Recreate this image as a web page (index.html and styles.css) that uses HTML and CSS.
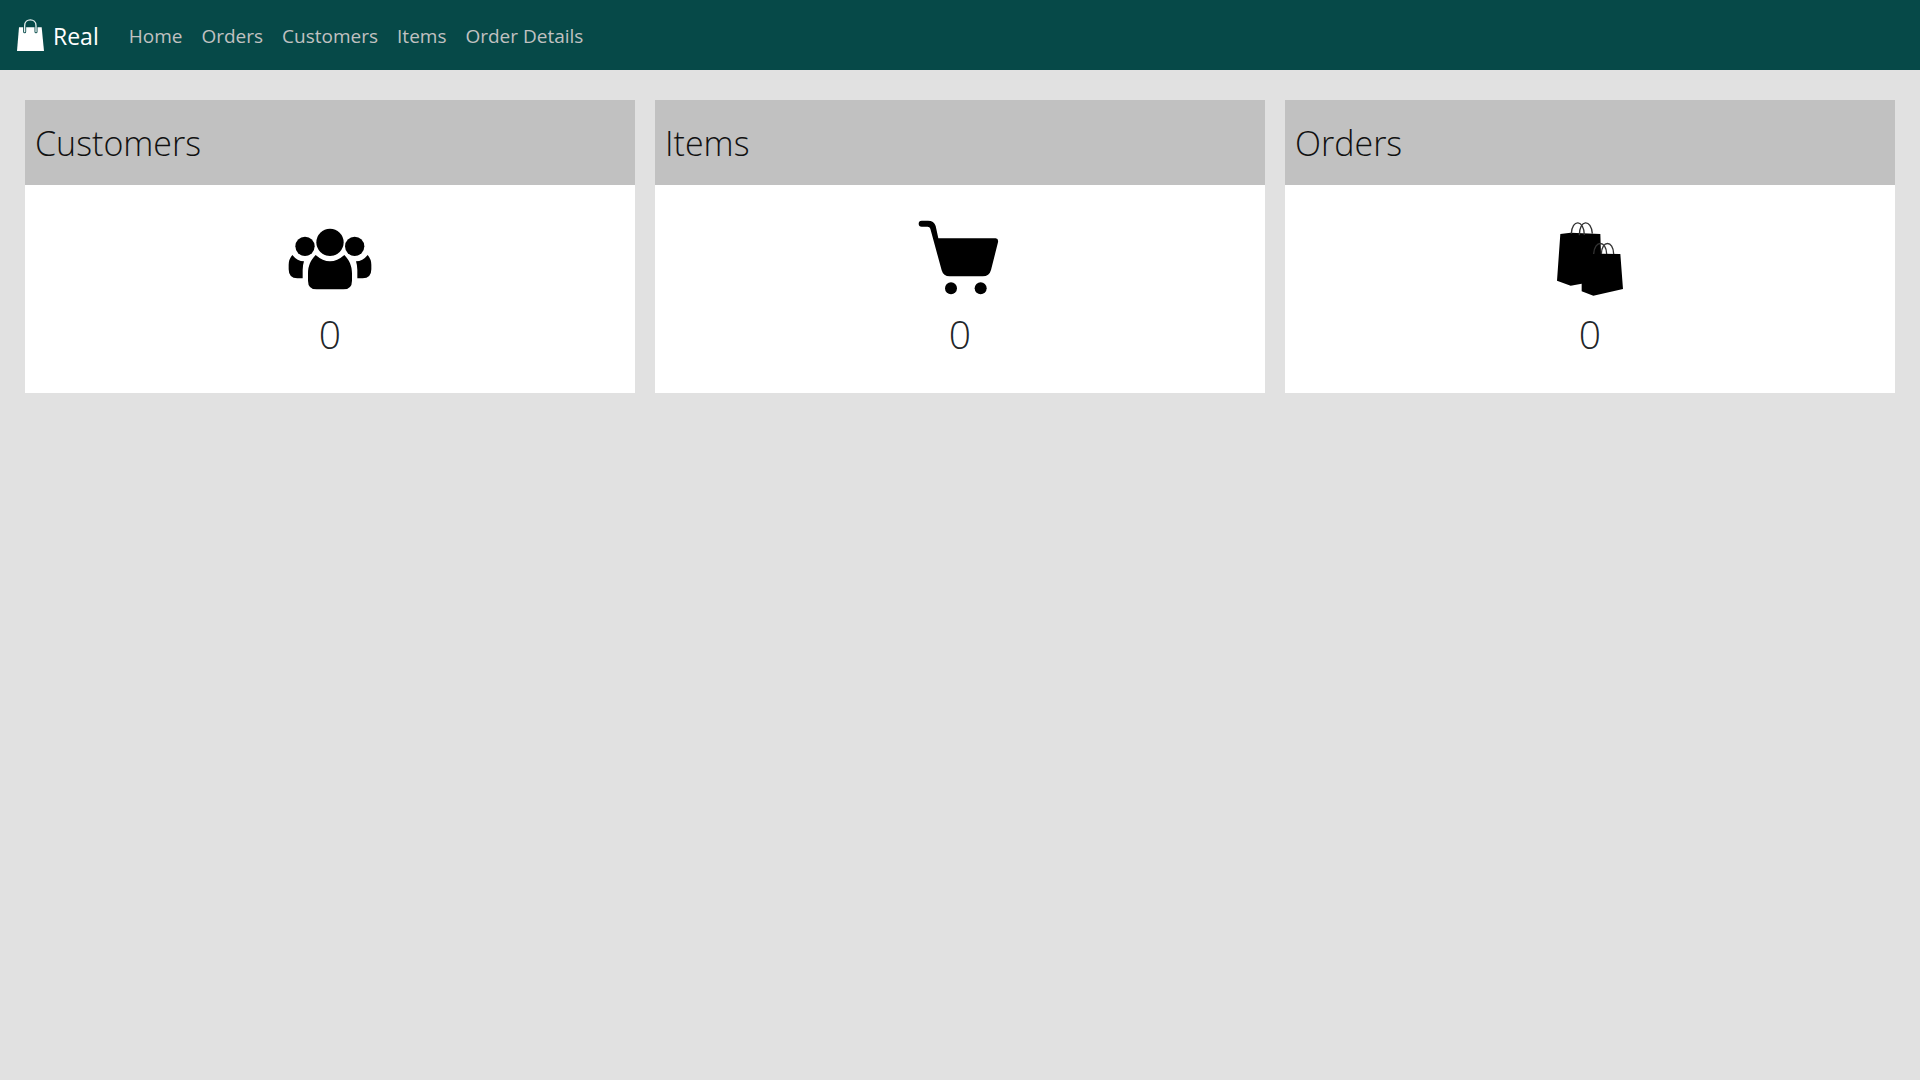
FILE: index.html
```html
<!DOCTYPE html>
<html lang="en">
<head>
<meta charset="utf-8">
<meta name="viewport" content="width=device-width, initial-scale=1">
<title>Real</title>
<link rel="stylesheet" href="styles.css">
</head>
<body>
<header class="navbar">
  <a class="brand" href="#">
    <svg class="brand-icon" viewBox="0 0 90 102" aria-hidden="true">
      <path fill="#fff" d="M12 25H80L87 96H6Z"/>
      <path fill="none" stroke="#064948" stroke-width="9" stroke-linecap="round" d="M29 25V38M63 25V38"/>
      <path fill="none" stroke="#e4efee" stroke-width="4" d="M29 40V20C29 -3 63 -3 63 20V40"/>
    </svg>
    <span>Real</span>
  </a>
  <nav class="nav-links" aria-label="Main">
    <a href="#">Home</a>
    <a href="#">Orders</a>
    <a href="#">Customers</a>
    <a href="#">Items</a>
    <a href="#">Order Details</a>
  </nav>
</header>
<main class="cards">
  <section class="card">
    <h2 class="card-title">Customers</h2>
    <div class="card-body">
      <svg class="card-icon" viewBox="30 0 300 300" aria-hidden="true">
        <circle cx="180" cy="97" r="41"/>
        <circle cx="105" cy="109" r="29"/>
        <circle cx="254" cy="109" r="29"/>
        <path d="M137 135Q180 173 223 135C238 150 246 168 246 190V212Q246 238 220 238H140Q114 238 114 212V190C114 168 122 150 137 135Z"/>
        <path d="M67 135Q82 154 102 154Q98 166 98 180V205H82Q56 205 56 178V164Q56 148 67 135Z"/>
        <path d="M293 135Q278 154 258 154Q262 166 262 180V205H278Q304 205 304 178V164Q304 148 293 135Z"/>
      </svg>
      <p class="card-count">0</p>
    </div>
  </section>
  <section class="card">
    <h2 class="card-title">Items</h2>
    <div class="card-body">
      <svg class="card-icon" viewBox="30 0 300 300" aria-hidden="true">
        <path d="M65 32H84Q102 32 107 48L115 85H287Q296 86 294 97L273 180Q268 199 248 199H149Q130 199 125 181L91 56Q89 50 83 50H65A9 9 0 0 1 65 32Z"/>
        <circle cx="153" cy="235" r="18"/>
        <circle cx="242" cy="235" r="18"/>
      </svg>
      <p class="card-count">0</p>
    </div>
  </section>
  <section class="card">
    <h2 class="card-title">Orders</h2>
    <div class="card-body">
      <svg class="card-icon" viewBox="30 0 300 300" aria-hidden="true">
        <path d="M91 72L122 68L211 72L213 131L271 132L279 237L190 257L155 244V221L122 227L81 212Z"/>
        <path fill="none" stroke="#333" stroke-width="4" d="M124 71C126 27 162 27 163 75M148 76C148 27 184 27 187 71M191 132C193 90 229 90 230 132M214 132C215 90 250 90 251 132"/>
      </svg>
      <p class="card-count">0</p>
    </div>
  </section>
</main>
</body>
</html>
```
FILE: styles.css
```css
* {
  box-sizing: border-box;
}

body {
  margin: 0;
  background: #e1e1e1;
  color: #212529;
  font-family: "Segoe UI", "Open Sans", sans-serif;
}

.navbar {
  display: flex;
  align-items: center;
  gap: 30px;
  min-height: 70px;
  padding: 2px 15px 0;
  background: #064948;
}

.brand {
  display: flex;
  align-items: center;
  gap: 8px;
  color: #fff;
  font-size: 23px;
  line-height: 38px;
  text-decoration: none;
}

.brand-icon {
  width: 30px;
  height: 34px;
}

.nav-links {
  display: flex;
  gap: 19px;
}

.nav-links a {
  color: #c1c1c1;
  font-size: 19px;
  line-height: 30px;
  text-decoration: none;
}

.cards {
  display: grid;
  grid-template-columns: repeat(3, 1fr);
  gap: 20px;
  padding: 30px 25px;
}

.card {
  background: #fff;
}

.card-title {
  margin: 0;
  padding: 21px 10px 19px;
  background: #c1c1c1;
  color: #111;
  font-size: 34px;
  font-weight: 300;
  line-height: 45px;
}

.card-body {
  display: flex;
  flex-direction: column;
  align-items: center;
  padding: 25px 10px 35px;
}

.card-icon {
  width: 100px;
  height: 100px;
}

.card-count {
  margin: 0;
  font-size: 39px;
  font-weight: 300;
  line-height: 48px;
}
```
